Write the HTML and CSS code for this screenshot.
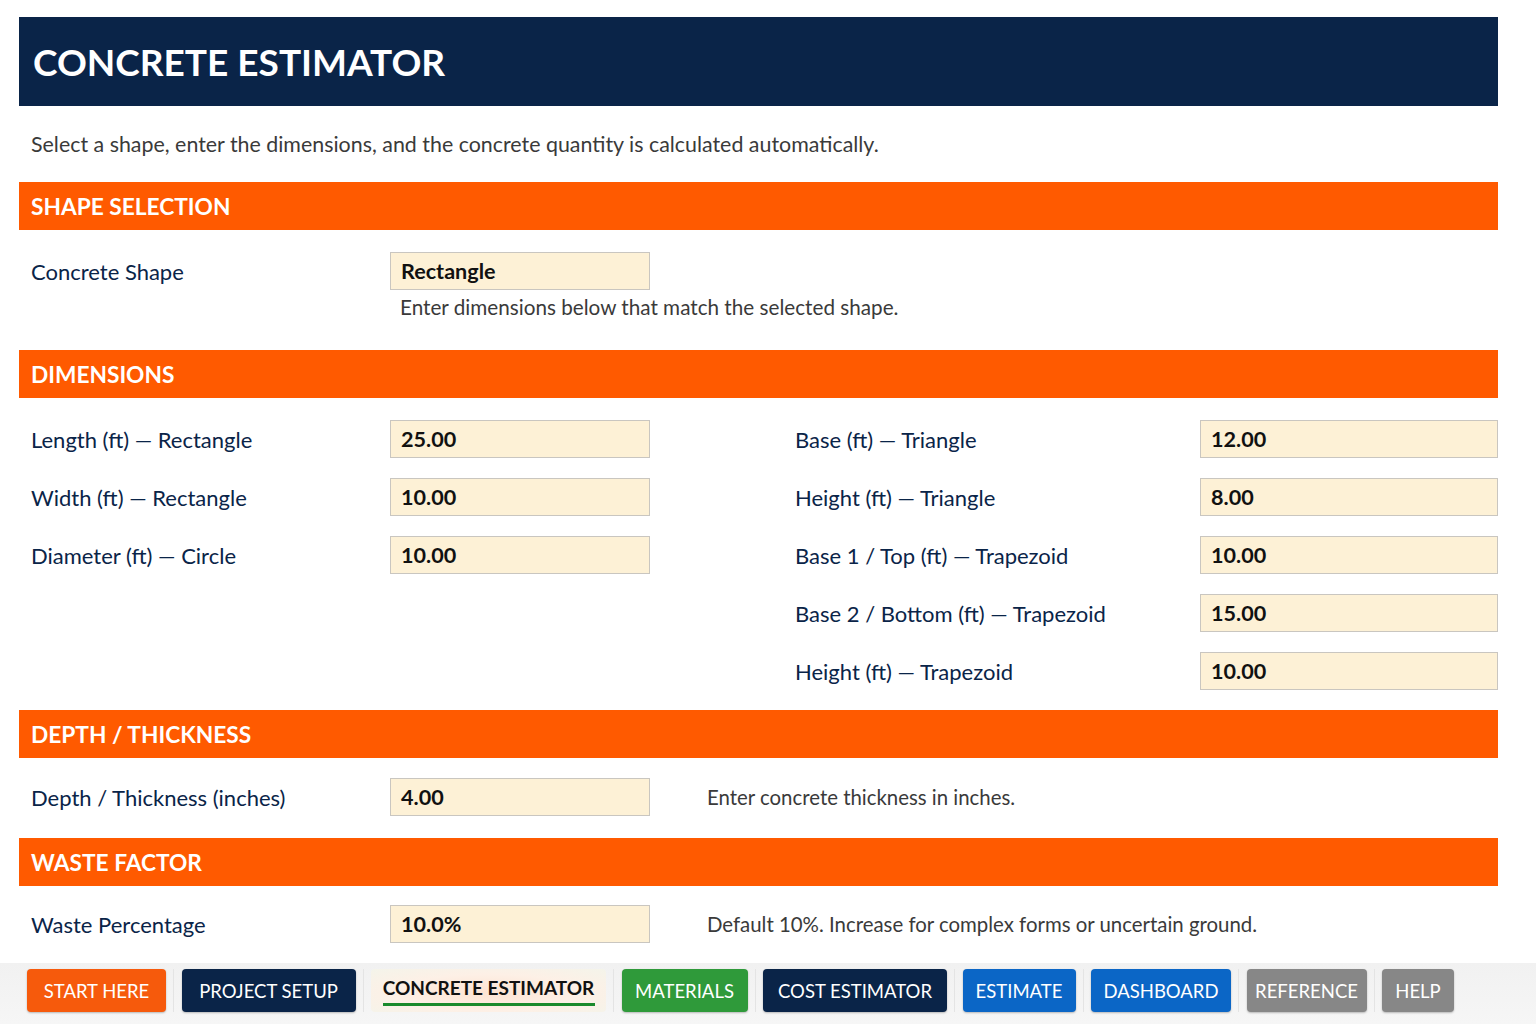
FILE: index.html
```html
<!DOCTYPE html>
<html lang="en">
<head>
<meta charset="utf-8">
<title>Concrete Estimator</title>
<link rel="stylesheet" href="styles.css">
</head>
<body>
<div class="page">
  <header class="title-bar"><h1>CONCRETE ESTIMATOR</h1></header>
  <p class="intro">Select a shape, enter the dimensions, and the concrete quantity is calculated automatically.</p>

  <section>
    <h2 class="bar">SHAPE SELECTION</h2>
    <div class="shape-block">
      <div class="row">
        <span class="label">Concrete Shape</span>
        <div class="field">Rectangle</div>
      </div>
      <p class="field-note">Enter dimensions below that match the selected shape.</p>
    </div>
  </section>

  <section>
    <h2 class="bar">DIMENSIONS</h2>
    <div class="dim-grid">
      <span class="label">Length (ft) — Rectangle</span>
      <div class="field">25.00</div>
      <span></span>
      <span class="label">Base (ft) — Triangle</span>
      <div class="field">12.00</div>

      <span class="label">Width (ft) — Rectangle</span>
      <div class="field">10.00</div>
      <span></span>
      <span class="label">Height (ft) — Triangle</span>
      <div class="field">8.00</div>

      <span class="label">Diameter (ft) — Circle</span>
      <div class="field">10.00</div>
      <span></span>
      <span class="label">Base 1 / Top (ft) — Trapezoid</span>
      <div class="field">10.00</div>

      <span></span><span></span><span></span>
      <span class="label">Base 2 / Bottom (ft) — Trapezoid</span>
      <div class="field">15.00</div>

      <span></span><span></span><span></span>
      <span class="label">Height (ft) — Trapezoid</span>
      <div class="field">10.00</div>
    </div>
  </section>

  <section>
    <h2 class="bar">DEPTH / THICKNESS</h2>
    <div class="row single">
      <span class="label">Depth / Thickness (inches)</span>
      <div class="field">4.00</div>
      <span class="hint">Enter concrete thickness in inches.</span>
    </div>
  </section>

  <section>
    <h2 class="bar">WASTE FACTOR</h2>
    <div class="row single last">
      <span class="label">Waste Percentage</span>
      <div class="field">10.0%</div>
      <span class="hint">Default 10%. Increase for complex forms or uncertain ground.</span>
    </div>
  </section>
</div>

<nav class="tabs">
  <a class="tab orange t-start">START HERE</a>
  <span class="sep"></span>
  <a class="tab navy t-setup">PROJECT SETUP</a>
  <span class="sep"></span>
  <a class="tab active t-concrete">CONCRETE ESTIMATOR</a>
  <span class="sep"></span>
  <a class="tab green t-materials">MATERIALS</a>
  <span class="sep"></span>
  <a class="tab navy t-cost">COST ESTIMATOR</a>
  <span class="sep"></span>
  <a class="tab blue t-estimate">ESTIMATE</a>
  <span class="sep"></span>
  <a class="tab blue t-dashboard">DASHBOARD</a>
  <span class="sep"></span>
  <a class="tab grey t-reference">REFERENCE</a>
  <span class="sep"></span>
  <a class="tab grey t-help">HELP</a>
</nav>
</body>
</html>
```
FILE: styles.css
```css
* { box-sizing: border-box; }
html, body { margin: 0; padding: 0; background: #fff; }
body {
  font-family: "Lato", "Open Sans", "Liberation Sans", sans-serif;
  color: #0a2448;
  width: 1536px;
  height: 1024px;
  overflow: hidden;
}
.page {
  padding: 17px 38px 0 19px;
}
.title-bar {
  background: #0a2448;
  height: 89px;
  display: flex;
  align-items: center;
  padding-left: 14px;
}
.title-bar h1 {
  margin: 0;
  color: #fff;
  font-size: 37px;
  font-weight: 700;
}
.intro {
  margin: 0;
  height: 76px;
  display: flex;
  align-items: center;
  padding-left: 12px;
  font-size: 21.4px;
  color: #3a3a3a;
}
.bar {
  margin: 0;
  background: #ff5a00;
  color: #fff;
  height: 48px;
  display: flex;
  align-items: center;
  padding-left: 12px;
  font-size: 22.7px;
  font-weight: 700;
}
.label {
  font-size: 22px;
  color: #0a2448;
  white-space: nowrap;
}
.field {
  height: 38px;
  background: #fdf1d6;
  border: 1px solid #c9c6c0;
  display: flex;
  align-items: center;
  padding-left: 10px;
  font-size: 21.6px;
  font-weight: 700;
  color: #111;
}
.shape-block {
  padding: 22px 0 0 12px;
  height: 120px;
}
.row {
  display: grid;
  grid-template-columns: 359px 260px;
  align-items: center;
}
.field-note {
  margin: 5px 0 0 359px;
  padding-left: 10px;
  font-size: 20.7px;
  color: #3a3a3a;
  line-height: 24px;
}
.dim-grid {
  display: grid;
  grid-template-columns: 359px 260px 145px 405px 298px;
  grid-auto-rows: 38px;
  row-gap: 20px;
  align-items: center;
  padding: 22px 0 20px 12px;
}
.row.single {
  grid-template-columns: 359px 260px 1fr;
  padding: 20px 0 22px 12px;
}
.row.single.last {
  padding: 19px 0 20px 12px;
}
.hint {
  padding-left: 57px;
  font-size: 20.4px;
  color: #3a3a3a;
}

.tabs {
  height: 61px;
  background: linear-gradient(#f1f1f1, #f6f6f6);
  display: flex;
  align-items: flex-start;
  padding: 6px 0 0 27px;
  gap: 7.25px;
}
.sep {
  width: 1px;
  height: 43px;
  background: #e4e4e4;
}
.tab {
  height: 43px;
  display: flex;
  align-items: center;
  justify-content: center;
  padding: 0;
  font-size: 18.5px;
  color: #fff;
  border-radius: 4px;
  box-shadow: 0 1px 2px rgba(0,0,0,0.25);
  white-space: nowrap;
}
.t-start { width: 139px; }
.t-setup { width: 174px; }
.t-concrete { width: 235px; }
.t-materials { width: 126px; }
.t-cost { width: 184px; }
.t-estimate { width: 113px; }
.t-dashboard { width: 140px; }
.t-reference { width: 120px; }
.t-help { width: 72px; }
.tab.orange { background: #f65a0c; }
.tab.navy { background: #0a2448; }
.tab.green { background: #2f9a3a; }
.tab.blue { background: #0b66c6; }
.tab.grey { background: #878787; }
.tab.active {
  background: radial-gradient(ellipse at 50% 55%, #fde3d2 0%, #fdf0e6 55%, #f4f4ea 100%);
  color: #111;
  font-weight: 700;
  font-size: 19px;
  box-shadow: none;
  flex-direction: column;
}
.tab.active::after {
  content: "";
  display: block;
  width: 212px;
  height: 3px;
  background: #1a8a2c;
  margin-top: 4px;
}
```
